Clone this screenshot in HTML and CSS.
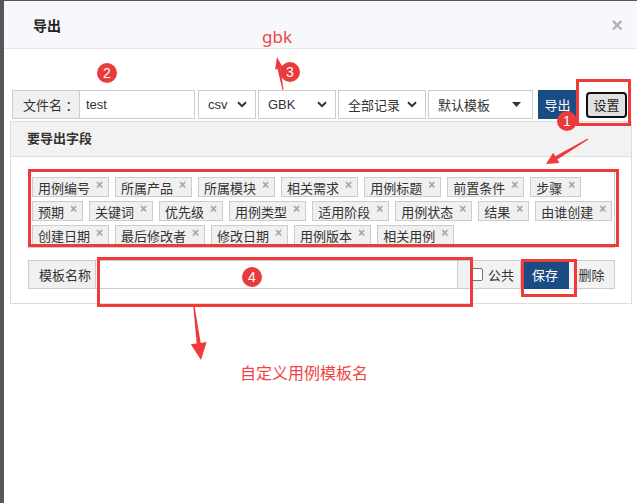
FILE: index.html
```html
<!DOCTYPE html>
<html lang="zh-CN">
<head>
  <meta charset="UTF-8" />
  <title>导出</title>
  <link rel="stylesheet" href="styles.css">
</head>
<body>

<div class="modal">
  <div class="modal-header">
    <h4 class="modal-title">导出</h4>
    <span class="close">×</span>
  </div>

  <div class="modal-body">
    <div class="toolbar">
      <div class="file-group">
        <span class="addon">文件名 ：</span>
        <span class="text-input">test</span>
      </div>
      <div class="select sel-csv">csv
        <svg width="10" height="7" viewBox="0 0 10 7"><path d="M1 1.2l4 4 4-4" fill="none" stroke="#333" stroke-width="2"/></svg>
      </div>
      <div class="select sel-enc">GBK
        <svg width="10" height="7" viewBox="0 0 10 7"><path d="M1 1.2l4 4 4-4" fill="none" stroke="#333" stroke-width="2"/></svg>
      </div>
      <div class="select sel-range">全部记录
        <svg width="10" height="7" viewBox="0 0 10 7"><path d="M1 1.2l4 4 4-4" fill="none" stroke="#333" stroke-width="2"/></svg>
      </div>
      <div class="select sel-tpl">默认模板
        <svg width="9" height="5" viewBox="0 0 9 5"><path d="M0 0h9L4.5 5z" fill="#333"/></svg>
      </div>
      <button class="btn btn-export">导出</button>
      <button class="btn btn-setting">设置</button>
    </div>

    <div class="panel">
      <div class="panel-heading">要导出字段</div>
      <div class="panel-body">
        <div class="tags-box">
          <div class="tag-row">
            <span class="tag">用例编号<i>×</i></span>
            <span class="tag">所属产品<i>×</i></span>
            <span class="tag">所属模块<i>×</i></span>
            <span class="tag">相关需求<i>×</i></span>
            <span class="tag">用例标题<i>×</i></span>
            <span class="tag">前置条件<i>×</i></span>
            <span class="tag">步骤<i>×</i></span>
          </div>
          <div class="tag-row">
            <span class="tag">预期<i>×</i></span>
            <span class="tag">关键词<i>×</i></span>
            <span class="tag">优先级<i>×</i></span>
            <span class="tag">用例类型<i>×</i></span>
            <span class="tag">适用阶段<i>×</i></span>
            <span class="tag">用例状态<i>×</i></span>
            <span class="tag">结果<i>×</i></span>
            <span class="tag">由谁创建<i>×</i></span>
          </div>
          <div class="tag-row">
            <span class="tag">创建日期<i>×</i></span>
            <span class="tag">最后修改者<i>×</i></span>
            <span class="tag">修改日期<i>×</i></span>
            <span class="tag">用例版本<i>×</i></span>
            <span class="tag">相关用例<i>×</i></span>
          </div>
        </div>

        <div class="template-row">
          <span class="addon tpl-addon">模板名称</span>
          <span class="text-input tpl-input"></span>
          <label class="public-box"><span class="checkbox"></span>公共</label>
          <button class="btn btn-save">保存</button>
          <button class="btn btn-delete">删除</button>
        </div>
      </div>
    </div>
  </div>
</div>

<!-- annotations drawn over the dialog -->
<svg class="marks" width="637" height="503" viewBox="0 0 637 503">
  <g fill="none" stroke="#f03a3a" stroke-width="3">
    <rect x="577.5" y="80.5" width="52" height="44"/>
    <rect x="29.5" y="170.5" width="588" height="75"/>
    <rect x="98.5" y="258.5" width="373" height="47"/>
    <rect x="522.5" y="260.5" width="53" height="35"/>
  </g>
  <g fill="#f03a3a">
    <polygon points="277,57 283,68.1 280.6,68.5 283.5,89.9 282.5,90.1 277.6,69.1 275.2,69.5"/>
    <polygon points="546,164 559.4,163.1 557.3,159.6 588.3,139.4 587.7,138.6 555.3,156.2 553.2,152.7"/>
    <polygon points="201,360 206.6,342.1 200.7,342.9 194.7,306.9 193.3,307.1 196.7,343.5 190.8,344.3"/>
  </g>
</svg>
<span class="note note-gbk">gbk</span>
<span class="note note-name">自定义用例模板名</span>
<span class="badge badge-1">1</span>
<span class="badge badge-2">2</span>
<span class="badge badge-3">3</span>
<span class="badge badge-4">4</span>

</body>
</html>
```

FILE: styles.css
```css
body {
  margin: 0;
  background: #575757;
  font-family: "Liberation Sans", "Noto Sans CJK SC", sans-serif;
  font-size: 13px;
  color: #333;
}

.modal {
  margin: 1px 0 0 4px;
  height: 502px;
  background: #fff;
}

.modal-header {
  height: 47px;
  border-bottom: 1px solid #e5e5e5;
  background: #f6f8fb;
  display: flex;
  align-items: center;
  justify-content: space-between;
  padding: 0 14px 0 29px;
}

.modal-title {
  margin: 0;
  font-size: 14px;
  font-weight: bold;
  color: #222;
}

.close {
  font-size: 20px;
  font-weight: bold;
  color: #b3b3b3;
  line-height: 1;
}

.modal-body {
  padding: 41px 5px 0 6px;
}

/* top toolbar */
.toolbar {
  display: flex;
  height: 29px;
  margin-left: 2px;
}

.file-group {
  display: flex;
  width: 183px;
}

.addon {
  display: flex;
  align-items: center;
  box-sizing: border-box;
  width: 68px;
  padding-left: 10px;
  background: #f0f0f0;
  border: 1px solid #ccc;
  color: #333;
  white-space: nowrap;
}

.text-input {
  display: flex;
  align-items: center;
  flex: 1;
  padding-left: 6px;
  border: 1px solid #ccc;
  border-left: none;
  background: #fff;
  color: #333;
}

.select {
  display: flex;
  align-items: center;
  justify-content: space-between;
  box-sizing: border-box;
  padding: 0 8px 0 9px;
  border: 1px solid #ccc;
  margin-left: 2px;
  color: #333;
}

.sel-csv { width: 58px; margin-left: 3px; }
.sel-enc { width: 78px; }
.sel-range { width: 88px; }
.sel-tpl { width: 105px; padding-right: 11px; }

.btn {
  font-family: inherit;
  font-size: 13px;
  border: none;
  padding: 0;
  cursor: pointer;
}

.btn-export {
  width: 39px;
  margin-left: 5px;
  background: #1a4c84;
  color: #fff;
}

.btn-setting {
  width: 41px;
  height: 26px;
  align-self: center;
  margin-left: 9px;
  background: #e1e1e1;
  border: 2px solid #111;
  border-radius: 4px;
  color: #222;
}

/* fields panel */
.panel {
  margin-top: 2px;
  border: 1px solid #ddd;
}

.panel-heading {
  height: 34px;
  line-height: 34px;
  padding-left: 16px;
  background: #f2f2f2;
  border-bottom: 1px solid #ddd;
  font-weight: bold;
  color: #333;
}

.panel-body {
  padding: 13px 16px 14px 17px;
}

.tags-box {
  display: flex;
  flex-direction: column;
  gap: 4px;
  padding: 6px 3px 2px;
  border: 1px solid #ccc;
}

.tag-row {
  display: flex;
  gap: 6px;
}

.tag {
  display: inline-flex;
  align-items: center;
  box-sizing: border-box;
  height: 20px;
  padding: 0 5px;
  background: #f0f0f0;
  border: 1px solid #ccc;
  color: #333;
  white-space: nowrap;
}

.tag i {
  font-style: normal;
  font-weight: bold;
  font-size: 12px;
  color: #a0a0a0;
  margin-left: 6px;
  position: relative;
  top: -2px;
}

.template-row {
  display: flex;
  height: 29px;
  margin-top: 12px;
}

.tpl-input {
  padding: 0;
}

.public-box {
  display: flex;
  align-items: center;
  gap: 5px;
  box-sizing: border-box;
  width: 63px;
  padding-left: 12px;
  background: #f2f2f2;
  border: 1px solid #ccc;
  border-left: none;
}

.checkbox {
  width: 11px;
  height: 11px;
  border: 1px solid #767676;
  border-radius: 2px;
  background: #fff;
}

.btn-save {
  width: 48px;
  background: #1a4c84;
  color: #fff;
}

.btn-delete {
  width: 46px;
  background: #f2f2f2;
  border: 1px solid #ccc;
  border-left: none;
  color: #333;
}

/* annotation layer */
.marks {
  position: absolute;
  left: 0;
  top: 0;
  pointer-events: none;
}

.note {
  position: absolute;
  color: #f04444;
  white-space: nowrap;
}

.note-gbk {
  left: 262px;
  top: 27px;
  font-family: "Noto Sans", sans-serif;
  font-size: 17px;
  line-height: 20px;
}

.note-name {
  left: 240px;
  top: 362px;
  font-family: "Noto Sans CJK SC", sans-serif;
  font-size: 16px;
  line-height: 20px;
}

.badge {
  position: absolute;
  width: 20px;
  height: 20px;
  border-radius: 50%;
  background: #e93b3b;
  color: #fff;
  font-family: "Liberation Sans", sans-serif;
  font-size: 14px;
  line-height: 20px;
  text-align: center;
}

.badge-1 { left: 557px; top: 111px; }
.badge-2 { left: 97px; top: 63px; }
.badge-3 { left: 280px; top: 62px; }
.badge-4 { left: 242px; top: 267px; }
```
